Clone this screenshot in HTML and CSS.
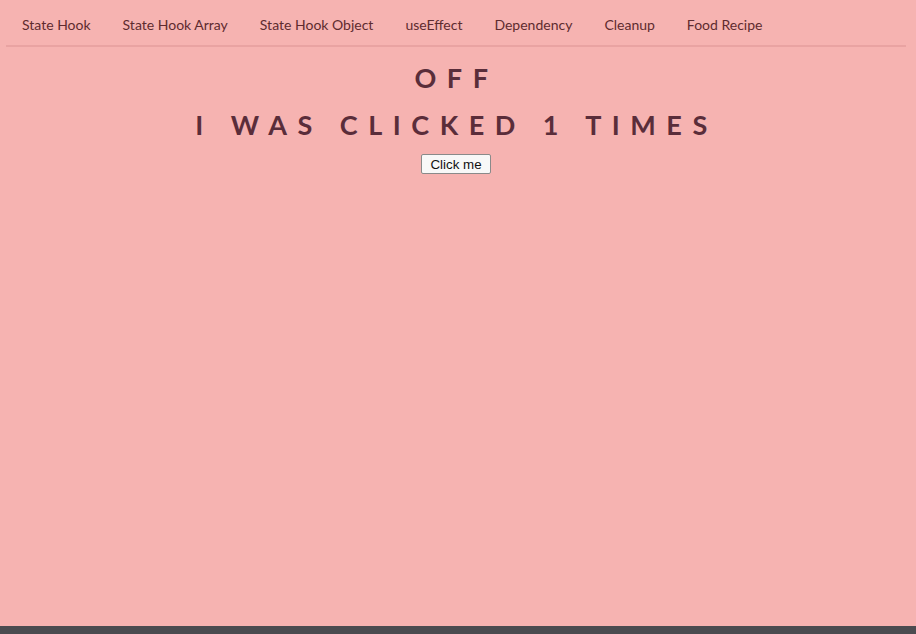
FILE: index.html
```html
<!DOCTYPE html>
<html lang="en">
<head>
<meta charset="utf-8">
<title>Hooks</title>
<link rel="stylesheet" href="styles.css">
</head>
<body>
<div class="app">
  <nav class="nav">
    <a class="nav-link" href="#">State Hook</a>
    <a class="nav-link" href="#">State Hook Array</a>
    <a class="nav-link" href="#">State Hook Object</a>
    <a class="nav-link" href="#">useEffect</a>
    <a class="nav-link" href="#">Dependency</a>
    <a class="nav-link" href="#">Cleanup</a>
    <a class="nav-link" href="#">Food Recipe</a>
  </nav>
  <main class="content">
    <h1 class="title">OFF</h1>
    <h1 class="title title-second">I was clicked 1 times</h1>
    <button class="btn" type="button">Click me</button>
  </main>
</div>
<div class="taskbar"></div>
</body>
</html>
```
FILE: styles.css
```css
html, body {
  margin: 0;
  padding: 0;
  height: 100%;
}
body {
  background: #f6b3b1;
  font-family: Lato, "Open Sans", sans-serif;
  display: flex;
  flex-direction: column;
  height: 100vh;
  overflow: hidden;
}
.app {
  flex: 1;
}
.nav {
  display: flex;
  margin: 0 10px 0 6px;
  padding: 16px 0 11px;
  border-bottom: 2px solid #e9a3a2;
}
.nav-link {
  font-size: 14px;
  line-height: 18px;
  color: #5e2b2f;
  text-decoration: none;
  padding: 0 16px;
}
.content {
  display: flex;
  flex-direction: column;
  align-items: center;
  padding-top: 14px;
}
.title {
  margin: 0 3px 0 0;
  font-family: Lato, sans-serif;
  font-weight: 700;
  font-size: 27px;
  line-height: 34px;
  letter-spacing: 10.5px;
  text-transform: uppercase;
  color: #5a2d3a;
}
.title-second {
  margin-top: 13px;
}
.btn {
  margin: 12px 4px 0 0;
  font-family: "Liberation Sans", Arial, sans-serif;
  font-size: 13.33px;
  color: #111;
  background: #f8f8f8;
  border: 1px solid #8a8a8a;
  border-radius: 2px;
  padding: 1px 8px;
  height: 20px;
}
.taskbar {
  height: 8px;
  background: #4b4b50;
  flex: none;
}
```
